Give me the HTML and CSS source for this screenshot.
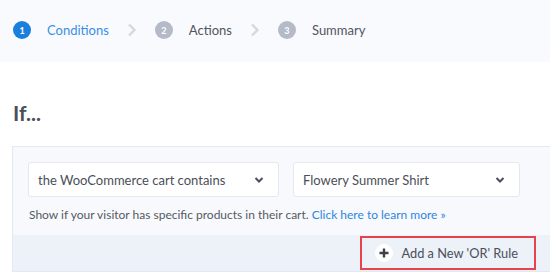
FILE: index.html
```html
<!DOCTYPE html>
<html lang="en">
  <head>
    <meta charset="UTF-8" />
    <meta name="viewport" content="width=device-width, initial-scale=1.0" />
    <title>Display Rules</title>
    <link rel="stylesheet" href="styles.css">
  </head>
  <body>
    <div class="steps">
      <div class="step active">
        <span class="step-num">1</span>
        <span class="step-label">Conditions</span>
      </div>
      <svg class="step-sep" viewBox="0 0 10 14" width="10" height="14">
        <path d="M2 1.5 L7.5 7 L2 12.5" fill="none" stroke="#d3d8e2" stroke-width="2.4" />
      </svg>
      <div class="step">
        <span class="step-num">2</span>
        <span class="step-label">Actions</span>
      </div>
      <svg class="step-sep" viewBox="0 0 10 14" width="10" height="14">
        <path d="M2 1.5 L7.5 7 L2 12.5" fill="none" stroke="#d3d8e2" stroke-width="2.4" />
      </svg>
      <div class="step">
        <span class="step-num">3</span>
        <span class="step-label">Summary</span>
      </div>
    </div>

    <div class="content">
      <h2 class="title">If...</h2>
      <div class="rule-box">
        <div class="rule-body">
          <div class="rule-row">
            <div class="select select-wide">
              the WooCommerce cart contains
              <svg class="caret" viewBox="0 0 10 8" width="10" height="8">
                <path d="M1.5 2 L5 5.5 L8.5 2" fill="none" stroke="#4a4f5c" stroke-width="2" />
              </svg>
            </div>
            <div class="select">
              Flowery Summer Shirt
              <svg class="caret" viewBox="0 0 10 8" width="10" height="8">
                <path d="M1.5 2 L5 5.5 L8.5 2" fill="none" stroke="#4a4f5c" stroke-width="2" />
              </svg>
            </div>
          </div>
          <p class="help">
            Show if your visitor has specific products in their cart.
            <a href="#">Click here to learn more &raquo;</a>
          </p>
        </div>
        <div class="rule-footer">
          <button class="add-rule">
            <span class="plus">
              <svg viewBox="0 0 10 10" width="10" height="10">
                <path d="M5 0.5 V9.5 M0.5 5 H9.5" stroke="#3c404b" stroke-width="2.4" />
              </svg>
            </span>
            Add a New 'OR' Rule
          </button>
        </div>
      </div>
    </div>
  </body>
</html>
```

FILE: styles.css
```css
* {
  box-sizing: border-box;
}
body {
  margin: 0;
  background: #fff;
  font-family: Lato, "Liberation Sans", sans-serif;
  color: #4b4f58;
  overflow: hidden;
}
.steps {
  display: flex;
  align-items: center;
  height: 62px;
  padding: 0 0 2px 13px;
  background: #f9fafd;
}
.step {
  display: flex;
  align-items: center;
  gap: 16px;
  font-size: 13px;
  color: #51555e;
}
.step-num {
  display: flex;
  align-items: center;
  justify-content: center;
  width: 18px;
  height: 18px;
  border-radius: 50%;
  background: #b4bac7;
  color: #fff;
  font-size: 9px;
  font-weight: 700;
}
.step.active .step-num {
  background: #1a7fdc;
}
.step.active .step-label {
  color: #3a8ee6;
}
.step-sep {
  margin: 0 18px 0 18px;
}
.content {
  padding: 0 0 0 12px;
}
.title {
  margin: 0;
  padding: 38px 0 21px 1px;
  font-size: 21px;
  font-weight: 700;
  line-height: 25px;
  color: #4b4f58;
}
.rule-box {
  width: 620px;
  border: 1px solid #e3e8f2;
  background: #f8f9fd;
}
.rule-body {
  padding: 15px 15px 0;
}
.rule-row {
  display: flex;
  gap: 14px;
}
.select {
  display: flex;
  align-items: center;
  justify-content: space-between;
  width: 227px;
  height: 35px;
  padding: 0 14px 0 9px;
  background: #fff;
  border: 1px solid #e4e8f1;
  border-radius: 3px;
  font-size: 13px;
  color: #4b4f58;
}
.select-wide {
  width: 251px;
}
.help {
  margin: 0;
  padding: 10px 0 12px 1px;
  font-size: 12px;
  line-height: 16px;
  color: #555962;
}
.help a {
  color: #2f86e0;
  text-decoration: none;
}
.rule-footer {
  display: flex;
  justify-content: flex-end;
  padding: 1px 95px 0 0;
  height: 36px;
  background: #edf1f8;
}
.add-rule {
  display: flex;
  align-items: center;
  gap: 8px;
  height: 34px;
  padding: 0 16px 0 13px;
  border: 2px solid #e8424a;
  background: transparent;
  font-family: inherit;
  font-size: 12.8px;
  color: #4b4f58;
}
.plus {
  display: flex;
  align-items: center;
  justify-content: center;
  width: 18px;
  height: 18px;
  border-radius: 50%;
  background: #fff;
}
```
